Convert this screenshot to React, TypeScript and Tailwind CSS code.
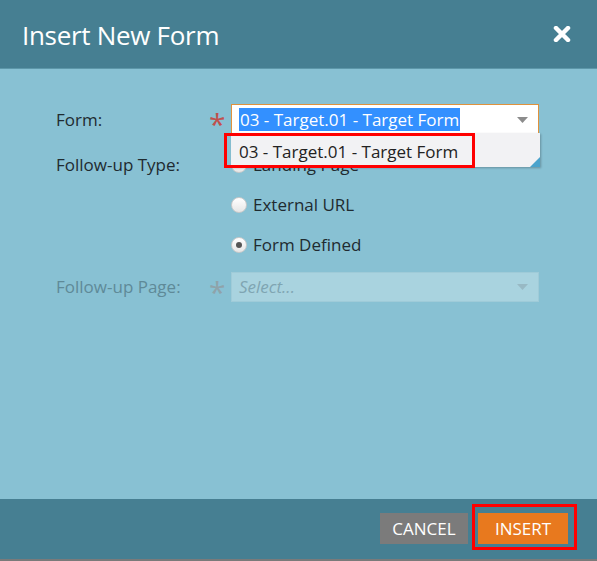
import React from "react";

function Asterisk({ faded }: { faded?: boolean }) {
  return (
    <span
      className={`flex h-[31px] w-[31px] items-center justify-start pl-[9px] pt-[9px] text-[30px] leading-none ${
        faded ? "text-[#8fa3aa]" : "text-[#c0504d]"
      }`}
    >
      *
    </span>
  );
}

function Caret({ faded }: { faded?: boolean }) {
  return (
    <svg width="11" height="6" viewBox="0 0 11 6" className="shrink-0">
      <path d="M0 0h11L5.5 6z" fill={faded ? "#98b9c4" : "#8c8c8c"} />
    </svg>
  );
}

function Radio({ label, checked }: { label: string; checked?: boolean }) {
  return (
    <label className="flex h-[40px] items-center gap-[6px] text-[#1f2b30]">
      <span className="flex h-[16px] w-[16px] items-center justify-center rounded-full border border-[#c9c9c9] bg-gradient-to-b from-white to-[#e6e6e6]">
        {checked ? <span className="h-[6px] w-[6px] rounded-full bg-[#555]" /> : null}
      </span>
      {label}
    </label>
  );
}

export default function App() {
  return (
    <div
      className="flex h-[561px] w-[597px] flex-col overflow-hidden bg-[#88c1d3]"
      style={{ fontFamily: '"Open Sans", "Liberation Sans", sans-serif' }}
    >
      <header className="flex h-[69px] shrink-0 items-center justify-between border-b border-[#5d97a9] bg-[#467f92] pl-[22px] pr-[26px]">
        <h1 className="pt-[2px] text-[26px] font-normal tracking-[-0.3px] text-white">Insert New Form</h1>
        <svg width="18" height="16" viewBox="0 0 18 16" aria-label="close">
          <path d="M3 2l12 12M15 2L3 14" stroke="#fff" strokeWidth="4.5" strokeLinecap="round" />
        </svg>
      </header>

      <main className="relative flex-1 pl-[56px] pr-[58px] pt-[35px] text-[17px] text-[#1f2b30]">
        <div className="grid grid-cols-[144px_31px_1fr] items-start">
          <span className="flex h-[31px] items-center">Form:</span>
          <Asterisk />
          <div className="relative">
            <div className="flex h-[31px] items-center justify-between border border-[#e0923c] bg-white pl-[7px] pr-[10px]">
              <span className="bg-[#3390ff] px-[1px] leading-[23px] text-white">03 - Target.01 - Target Form</span>
              <Caret />
            </div>
            <div className="absolute left-0 top-[29px] z-10 h-[34px] w-[309px] overflow-hidden bg-[#f2f2f4] shadow-[1px_1px_2px_rgba(0,0,0,0.25)]">
              <div className="flex h-full items-center pl-[8px] pt-[3px] text-[#222]">03 - Target.01 - Target Form</div>
              <span className="absolute bottom-0 right-0 h-0 w-0 border-b-[10px] border-l-[10px] border-b-[#4aa3cc] border-l-transparent" />
            </div>
            <div className="absolute left-[-7px] top-[29px] z-20 h-[35px] w-[251px] border-[3px] border-[#ff0000]" />
          </div>

          <span className="box-content flex h-[40px] items-center pt-[10px]">Follow-up Type:</span>
          <span />
          <div className="pt-[10px]">
            <Radio label="Landing Page" />
            <Radio label="External URL" />
            <Radio label="Form Defined" checked />
          </div>

          <span className="mt-[7px] flex h-[30px] items-center text-[#5f8a98]">Follow-up Page:</span>
          <span className="mt-[7px]">
            <Asterisk faded />
          </span>
          <div className="mt-[7px] flex h-[30px] items-center justify-between border border-[#9fcbd8] bg-[#a9d3df] pl-[7px] pr-[10px]">
            <span className="italic text-[#7fa5b2]">Select...</span>
            <Caret faded />
          </div>
        </div>
      </main>

      <footer className="flex h-[62px] shrink-0 items-start justify-end gap-[10px] border-b-2 border-[#7a7a7a] bg-[#467f92] pr-[29px] pt-[14px]">
        <button className="h-[31px] w-[88px] bg-[#7b7b7b] text-[17px] uppercase text-white">Cancel</button>
        <div className="relative">
          <button className="h-[31px] w-[90px] bg-[#e8791e] text-[17px] uppercase text-white">Insert</button>
          <span className="absolute left-[-6px] top-[-9px] h-[46px] w-[105px] border-[3px] border-[#ff0000]" />
        </div>
      </footer>
    </div>
  );
}
